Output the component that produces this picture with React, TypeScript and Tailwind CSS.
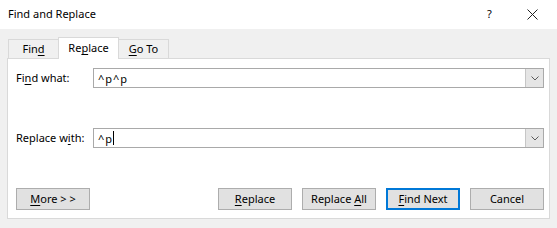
import React from 'react';

const U: React.FC<{ children: React.ReactNode }> = ({ children }) => <span className="underline underline-offset-2">{children}</span>;

const Combo: React.FC<{ value: string; caret?: boolean }> = ({ value, caret }) => (
    <div className="flex-1 h-[20px] flex border border-[#a9a9a9] bg-white">
        <div className="flex-1 flex items-center pl-[4px] text-[11px] text-black leading-none tracking-[1px]">
            {value}
            {caret && <span className="inline-block w-px h-[14px] bg-black"></span>}
        </div>
        <div className="w-[18px] bg-[#e5e5e5] border-l border-[#c6c6c6] flex items-center justify-center">
            <svg width="8" height="5" viewBox="0 0 8 5" fill="none" stroke="#5a5a5a" strokeWidth="1">
                <path d="M0.5 0.5 L4 4 L7.5 0.5" />
            </svg>
        </div>
    </div>
);

const Btn: React.FC<{ children: React.ReactNode; primary?: boolean }> = ({ children, primary }) => (
    <div
        className={`w-[74px] h-[22px] flex items-center justify-center bg-[#e1e1e1] text-[11px] text-black ${primary ? 'border-2 border-[#0078d7]' : 'border border-[#adadad]'}`}
    >
        <span>{children}</span>
    </div>
);

export default function App() {
    return (
        <div className="w-[557px] h-[228px] bg-[#f0f0f0] text-black" style={{ fontFamily: '"Segoe UI", "Noto Sans", sans-serif' }}>
            <div className="h-[29px] bg-white flex items-center justify-between pl-[8px]">
                <span className="text-[11px]">Find and Replace</span>
                <div className="flex items-center">
                    <span className="text-[11px] w-[14px] mr-[26px]">?</span>
                    <svg width="11" height="11" viewBox="0 0 11 11" stroke="#222" strokeWidth="1" className="mr-[19px]">
                        <path d="M0.5 0.5 L10.5 10.5 M10.5 0.5 L0.5 10.5" />
                    </svg>
                </div>
            </div>
            <div className="px-[7px] pt-[8px]">
                <div className="flex items-end h-[21px] pl-[1px] relative z-10">
                    <div className="w-[51px] h-[19px] border border-b-0 border-[#d9d9d9] flex items-center justify-center text-[11px]">
                        <span>Fin<U>d</U></span>
                    </div>
                    <div className="w-[61px] h-[22px] -mb-px -ml-px bg-white border border-b-0 border-[#d9d9d9] flex items-center justify-center text-[11px]">
                        <span>Re<U>p</U>lace</span>
                    </div>
                    <div className="w-[51px] h-[19px] -ml-px border border-b-0 border-[#d9d9d9] flex items-center justify-center text-[11px]">
                        <span><U>G</U>o To</span>
                    </div>
                </div>
                <div className="h-[161px] bg-white border border-[#d9d9d9] pt-[9px] pl-[8px] pr-[5px] flex flex-col">
                    <div className="flex items-center">
                        <span className="w-[77px] text-[11px]">Fi<U>n</U>d what:</span>
                        <Combo value="^p^p" />
                    </div>
                    <div className="flex items-center mt-[40px]">
                        <span className="w-[77px] text-[11px]">Replace w<U>i</U>th:</span>
                        <Combo value="^p" caret />
                    </div>
                    <div className="flex items-center mt-[40px]">
                        <Btn><U>M</U>ore &gt; &gt;</Btn>
                        <div className="flex-1"></div>
                        <div className="flex gap-[10px]">
                            <Btn><U>R</U>eplace</Btn>
                            <Btn>Replace <U>A</U>ll</Btn>
                            <Btn primary><U>F</U>ind Next</Btn>
                            <Btn>Cancel</Btn>
                        </div>
                    </div>
                </div>
            </div>
        </div>
    );
}
